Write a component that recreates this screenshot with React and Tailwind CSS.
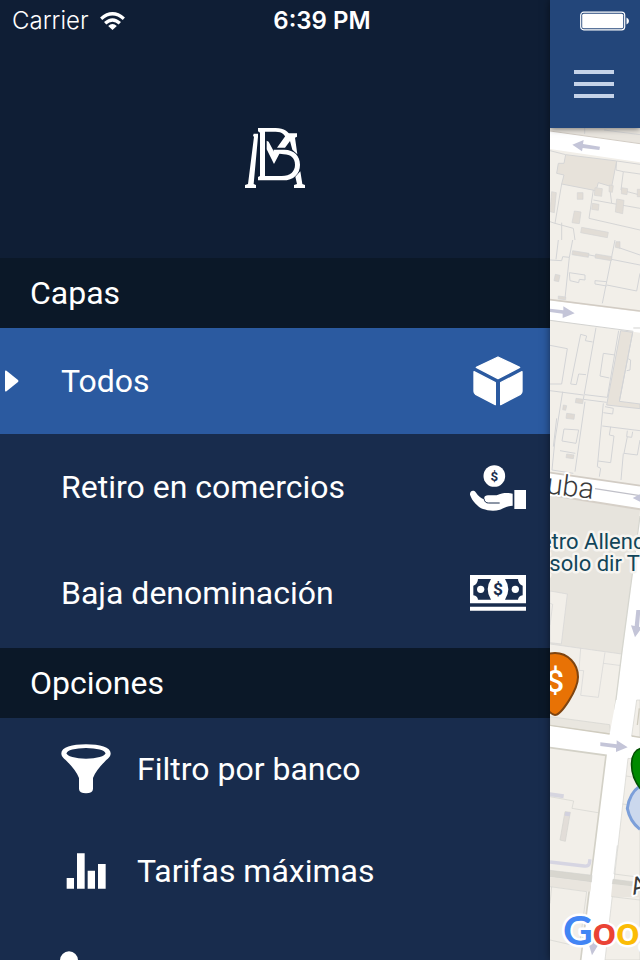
const layers = [
  { id: "all", label: "Todos", Icon: CubeIcon, active: true },
  { id: "cash", label: "Retiro en comercios", Icon: HandIcon },
  { id: "bills", label: "Baja denominación", Icon: BillsIcon },
];

const options = [
  { id: "filter", label: "Filtro por banco", Icon: FunnelIcon },
  { id: "fees", label: "Tarifas máximas", Icon: BarsIcon },
  { id: "more", label: "", Icon: PinIcon },
];

function CubeIcon() {
  return (
    <svg viewBox="60 39 168 168" className="size-14 shrink-0" fill="white" stroke="white" strokeWidth="4" strokeLinejoin="round" aria-hidden="true">
      <path d="M144 51 L209 82 L144 116 L79 82Z" />
      <path d="M72 95 L136 128 V194 L77 163 Q72 160 72 154Z" />
      <path d="M216 95 L152 128 V194 L211 163 Q216 160 216 154Z" />
    </svg>
  );
}

function HandIcon() {
  return (
    <svg viewBox="60 357 168 168" className="size-14 shrink-0" fill="white" aria-hidden="true">
      <circle cx="133" cy="408" r="32.5" />
      <text x="133" y="422" textAnchor="middle" fontSize="40" className="fill-[#182c4d] font-['Roboto',sans-serif] font-bold">$</text>
      <path d="M60 464 C59 452 71 449 77 457 C85 469 94 476 103 478 C101 469 107 466 114 466 H140 C158 458 172 458 188 461 V497 C170 498 160 505 150 509 C130 515 112 511 99 507 C84 501 66 483 60 464Z" />
      <path d="M102 476 C104 486 108 489 116 489 H149" fill="none" stroke="#182c4d" strokeWidth="3" />
      <rect x="193" y="450" width="35" height="57" />
    </svg>
  );
}

function BillsIcon() {
  return (
    <svg viewBox="60 675 168 168" className="size-14 shrink-0" fill="white" aria-hidden="true">
      <path d="M60 705 H228 V790 H60Z M60 800 H228 V812 H60Z" />
      <path d="M84 717 H123 Q103 748 123 779 H84 Q83 768 70 766 V737 Q83 733 84 717Z" fill="#182c4d" />
      <path d="M204 717 H165 Q185 748 165 779 H204 Q205 768 218 766 V737 Q205 733 204 717Z" fill="#182c4d" />
      <circle cx="92" cy="748" r="11" />
      <circle cx="196" cy="748" r="11" />
      <text x="144" y="766" textAnchor="middle" fontSize="52" className="fill-[#182c4d] font-['Roboto',sans-serif] font-bold">$</text>
    </svg>
  );
}

function FunnelIcon() {
  return (
    <svg viewBox="180 39 156 156" className="size-[52px] shrink-0" fill="white" aria-hidden="true">
      <path d="M184 70 C184 52 216 43 258 43 C300 43 332 52 332 70 C332 82 321 88 314 95 C298 111 285 127 279 144 V177 Q278 190 258 190 Q238 190 237 177 V144 C231 127 218 111 202 95 C195 88 184 82 184 70Z" />
      <ellipse cx="258" cy="70" rx="58" ry="16" fill="#182c4d" />
    </svg>
  );
}

function BarsIcon() {
  return (
    <svg viewBox="180 345 156 156" className="size-[52px] shrink-0" fill="white" aria-hidden="true">
      <path d="M200 444h22v32h-22zM231 370h23v106h-23zM263 422h22v54h-22zM294 402h23v74h-23z" />
    </svg>
  );
}

function PinIcon() {
  return (
    <svg viewBox="180 651 156 156" className="size-[52px] shrink-0" fill="white" aria-hidden="true">
      <circle cx="207" cy="691" r="27" />
    </svg>
  );
}

function WifiIcon() {
  return (
    <svg viewBox="0 0 74 54" className="h-[18px] w-[25px]" fill="none" stroke="white" strokeWidth="10" aria-hidden="true">
      <path d="M3 20 Q37 -9 71 20" />
      <path d="M15 34 Q37 14 59 34" />
      <path d="M37 54 L24 42 Q37 30 50 42Z" fill="white" stroke="none" />
    </svg>
  );
}

function BatteryIcon() {
  return (
    <svg viewBox="0 0 52 20" className="h-5 w-[52px] justify-self-end" aria-hidden="true">
      <rect x="0.7" y="1.2" width="44" height="17.6" rx="3" fill="none" stroke="white" strokeWidth="1.2" />
      <rect x="2.2" y="2.7" width="41" height="14.6" rx="1.5" fill="white" />
      <path d="M46.5 6.5 Q49 7.5 49 10 Q49 12.5 46.5 13.5Z" fill="white" />
    </svg>
  );
}

function Logo() {
  return (
    <svg viewBox="60 54 180 180" className="size-[60px]" fill="white" role="img" aria-label="Banco de México">
      <path d="M86 71 H99 V80 L86 222 L93 225 V234 H60 V225 L69 222 L87 80 L84 78Z" />
      <path d="M99 54 H152 C178 54 192 66 195 78 L185 90 C181 75 172 65 152 65 H120 V198 H170 C196 198 210 184 210 164 C210 145 197 133 176 133 L146 129 V119 H178 C208 119 225 138 225 164 C225 192 206 211 174 211 H99 V201 L105 198 V68 L99 64Z" />
      <path d="M125 92 L131 95 L149 129 L155 126 H166 L147 162 L125 118Z" />
      <path d="M187 70 H216 V80 L210 83 L217 133 L202 119 L195 93 L180 113 H156Z" />
      <path d="M226 184 L232 222 L240 225 V234 H207 V225 L216 222 L211 200Z" />
    </svg>
  );
}

function StreetMap() {
  return (
    <svg viewBox="550 128 90 832" className="block h-[832px] w-full" preserveAspectRatio="xMinYMin slice" role="img" aria-label="Mapa">
      <rect x="550" y="128" width="900" height="832" fill="#f2efe9" />

      {/* Northern blocks */}
      <g transform="translate(540 0) scale(0.33333)" fill="none" stroke="#d5d5d5" strokeWidth="3">
        <path d="M30 384 H300 V430 L30 392Z" fill="#e9e5de" stroke="none" />
        <path d="M30 393 L300 431 V487 L30 447Z" fill="#fff" stroke="none" />
        <path d="M30 393 L300 431" stroke="#d2ccc4" strokeWidth="3" />
        <path d="M134 384 V402 M192 390 L300 404" />
        <path d="M77 464 L230 483 L215 560 L175 548 L168 572 L65 552 L72 525 L50 520 L55 490 L72 490Z" fill="#e7e2da" />
        <path d="M97 434 L131 420 L129 432 L180 440 L178 450 L128 444 L126 454Z" fill="#c4c5d8" stroke="none" />
        <path d="M30 452 L77 464 M230 483 L300 493 M230 483 L228 510 L250 515 L243 570 L300 585 M250 515 L300 522 M65 552 L45 670 L30 665 M160 570 L147 655 L300 690 M160 600 L215 610 L210 570 M45 670 L100 685 L105 720 M215 610 L300 625 M65 668 V720" />
        <g fill="#e2ddd6" strokeWidth="2">
          <path d="M112 578h17v20h-17z M165 563l22 3-2 23-22-3z M157 610l20 3-2 18-20-3z M230 597l22 4-4 40-22-5z M103 633l20 3-5 35-22-3z M208 555l12 2-3 20-10-2z M245 563l18 3-2 18-17-3z M292 568h10v22h-10z M35 575l14 3-6 60-13-3z M125 682l80 15-3 16-80-15z" />
        </g>
      </g>

      <g transform="translate(540 240) scale(0.33333)" fill="none" stroke="#d3d4d6" strokeWidth="3">
        <path d="M30 60 L65 62 L68 50 L88 52 L75 175 M98 0 L88 52 M98 35 L300 75 M55 0 L48 58 M225 0 L187 190 M200 135 L290 153 L300 100 M228 20 L300 45 M88 98 L135 105 V120 L118 118 L116 128 L90 122Z M200 125 L165 122 V132 L200 138" />
        <path d="M98 32l49 8-2 12-49-8z M167 42l49 8-2 12-49-8z M46 103l14 3-4 19-14-3z M228 5h12v20l-14-3z M55 168l22 3v8l-22-2z" fill="#dfdad4" strokeWidth="2" />
        <path d="M30 181 L300 216 V278 L30 240Z" fill="#fff" stroke="none" />
        <path d="M30 179 L300 213" stroke="#d2ccc4" strokeWidth="5" />
        <path d="M30 241 L280 274 M280 264 L300 264" stroke="#d2d2d0" />
        <path d="M30 206 L70 211 V199 L104 220 L68 234 V221 L30 216Z" fill="#c4c5d8" stroke="none" />
        <path d="M242 272 L278 277 L238 484 L300 492 V506 L200 495Z" fill="#e7e2da" />
        <path d="M168 263 L130 478 L200 487 M236 272 L202 472 L135 464 M30 316 L82 326 L65 432 L30 432 M122 283 L140 288 L136 302 L158 306 M122 283 L92 432 L109 434 L116 402 L138 404 M225 345 L190 340 L180 408 L208 414 M278 277 L238 484 M262 355 L272 360 L270 390 L260 392 M30 452 L130 465 M190 490 L172 680 L182 685 L178 710 M135 485 L105 695 M68 455 L45 600 L36 690 L100 700 M72 567 L116 570 L108 610 L66 603Z M60 632 L106 640 M187 558 L300 572 M212 560 L208 585 L222 588 L212 668 L174 663 M262 572 L260 590 L275 592 L278 575 M262 590 L252 640 L292 645 L300 600 M195 500 L220 505 L218 522 L190 518 M250 640 L243 720 M50 535 L40 620" />
        <path d="M108 475l22 3-2 13-22-3z M80 520l24 3-2 15-24-3z M80 642l22 3-2 11-22-3z M70 495l10 2-3 14-9-2z" fill="#dfdad4" strokeWidth="2" />
      </g>

      {/* Plaza and the avenue beside it */}
      <g transform="translate(540 460) scale(0.33333)" fill="none" stroke="#d5d5d5" strokeWidth="2">
        <path d="M30 38 L300 77 V148 L30 104Z" fill="#fff" stroke="none" />
        <path d="M30 38 L300 77" stroke="#d2ccc4" strokeWidth="5" />
        <path d="M165 86 L300 107" stroke="#c0c0c8" strokeWidth="4" />
        <path d="M278 114 L300 103 V125Z" fill="#c4c5d8" stroke="none" />
        <path d="M30 107 L300 150 L245 582 L30 552Z" fill="#e7e4dd" stroke="none" />
        <path d="M30 105 L300 148" stroke="#d6d0c8" strokeWidth="6" />
        <path d="M30 393 L82 402 L64 552 L30 548Z" fill="#f2efe9" />
        <path d="M30 430 L38 433 L30 495 M30 552 L245 582 M195 577 L175 712 M122 565 L117 630 M98 630 L131 632 L122 706 L175 712 M190 610 L245 617" />
        <path d="M300 168 L224 750 H300Z" fill="#fff" stroke="none" />
        <path d="M300 168 L245 582 L224 750" stroke="#d6d6cf" strokeWidth="4" />
        <path d="M289 450 L301 450 L297 500 L306 502 L285 532 L273 496 L284 498Z" fill="#c4c5d8" stroke="none" />
      </g>

      {/* Southern crossing */}
      <g transform="translate(540 700) scale(0.33333)" fill="none" stroke="#d3d3cf" strokeWidth="2">
        <path d="M30 50 L209 74 L212 102 L30 77Z" fill="#e9e6df" />
        <path d="M228 0 L300 0 V780 H122 L198 166 L30 143 V77 L209 102Z" fill="#fff" stroke="none" />
        <path d="M290 0 L275 108 L300 111 V0Z" fill="#f2efe9" />
        <path d="M298 25 L292 75 M30 76 L209 102 M275 108 L300 112" stroke="#d0ccbf" strokeWidth="4" />
        <path d="M30 143 L198 166 L122 780" stroke="#d3d1c7" strokeWidth="5" />
        <path d="M264 175 L300 179 V780 H195Z" fill="#f2efe9" />
        <path d="M258 228 L300 235 M248 312 L300 320 M232 436 L222 522 L300 532" />
        <path d="M30 511 L156 526 L154 546 L30 530Z" fill="#d8d6cf" />
        <path d="M219 538 L300 548 V562 L217 552Z" fill="#d8d6cf" />
        <path d="M30 531 L154 547 L151 575 L30 559Z M217 552 L300 562 V592 L213 590Z" fill="#e9e5de" stroke="none" />
        <path d="M96 325 L174 338 M30 290 L101 303 L96 325 M35 560 L30 610 M30 560 L140 575 L118 740 L30 720 M215 590 L300 600" />
        <path d="M30 277 L72 283 L70 295 L30 289Z" fill="#d6d5df" stroke="none" />
        <path d="M30 486 L132 498 Q146 500 148 490 L150 478" stroke="#d6d5e2" strokeWidth="10" />
        <path d="M75 335 L91 337 L76 424 L60 420Z" fill="#e2ddd8" />
        <path d="M76 335 L91 337 L89 349 L74 347Z" fill="#d2d1de" stroke="none" />
        <path d="M181 127 L230 133 V121 L263 142 L228 156 V144 L181 138Z" fill="#c4c5d8" stroke="none" />
        <path d="M155 700 V728 L145 728 L156 766 L175 734 L163 732 L168 700Z" fill="#c4c5d8" stroke="none" />
        <path d="M300 258 Q268 280 262 325 Q270 365 300 388" fill="#cbd8ed" stroke="#7c9fd9" strokeWidth="9" />
        <path d="M305 145 C267 150 263 220 303 268Z" fill="#008a00" stroke="#035003" strokeWidth="5" />
      </g>

      <path d="M555 715 C549 715 532 690 532 677 A23 24 0 0 1 578 677 C578 690 561 715 555 715Z" fill="#e87205" stroke="#7e4410" strokeWidth="2" />
      <text x="555" y="692" textAnchor="middle" fontSize="32" className="fill-white font-['Roboto',sans-serif] font-medium">$</text>

      <g className="fill-[#3a3a3a] stroke-white font-['Roboto',sans-serif]" strokeWidth="4" strokeLinejoin="round" paintOrder="stroke">
        <text x="593" y="499" textAnchor="end" fontSize="29" fontWeight="300" transform="rotate(7 593 499)">Cuba</text>
        <text x="633" y="895" fontSize="24" transform="rotate(-14 633 895)">A</text>
      </g>
      <g className="fill-[#124559] stroke-[#f7f5f1] font-['Roboto',sans-serif]" strokeWidth="5" strokeLinejoin="round" paintOrder="stroke" fontSize="22">
        <text x="657" y="549" textAnchor="end">Metro Allende</text>
        <text x="640" y="571" textAnchor="end">(solo dir T</text>
      </g>
      <text x="563" y="945" fontSize="41" className="stroke-white font-['Lato',sans-serif] font-bold" strokeWidth="5" strokeLinejoin="round" paintOrder="stroke">
        <tspan fill="#4285f4">G</tspan>
        <tspan fill="#ea4335">o</tspan>
        <tspan fill="#fbbc05">o</tspan>
        <tspan fill="#4285f4">g</tspan>
      </text>
    </svg>
  );
}

function SectionTitle({ children }) {
  return (
    <h2 className="flex h-[70px] items-center bg-[#0b1828] px-[30px]">{children}</h2>
  );
}

function StatusBar() {
  return (
    <div className="absolute inset-x-0 top-0 z-20 grid h-[42px] grid-cols-[1fr_auto_1fr] items-center pr-2 pl-3 font-['Inter',sans-serif] text-2xl text-white">
      <div className="flex items-center gap-[11px]">
        <span className="font-light">Carrier</span>
        <WifiIcon />
      </div>
      <time className="font-semibold">6:39 PM</time>
      <BatteryIcon />
    </div>
  );
}

export default function App() {
  return (
    <div className="relative flex h-screen overflow-hidden bg-[#182c4d] font-['Roboto',sans-serif] text-[32px] leading-10 text-white">
      <StatusBar />
      <nav className="min-w-0 flex-1">
        <div className="flex h-[258px] justify-center bg-[#0f1e35] pt-32">
          <Logo />
        </div>
        <SectionTitle>Capas</SectionTitle>
        <ul className="pb-0.5">
          {layers.map(({ id, label, Icon, active }) => (
            <li key={id}>
              <button
                type="button"
                aria-pressed={!!active}
                className={`flex h-[106px] w-full items-center pr-6 text-left ${active ? "bg-[#2b5aa0]" : ""}`}
              >
                <span className="w-[61px] shrink-0 pl-[5px]">
                  {active && (
                    <svg viewBox="0 0 14 22" className="h-[22px] w-[14px]" fill="white" aria-hidden="true">
                      <path d="M0 1.5 Q0 0 1.5 0.8 L13 10 Q14 11 13 12 L1.5 21.2 Q0 22 0 20.5Z" />
                    </svg>
                  )}
                </span>
                <span className="flex-1">{label}</span>
                <Icon />
              </button>
            </li>
          ))}
        </ul>
        <SectionTitle>Opciones</SectionTitle>
        <ul>
          {options.map(({ id, label, Icon }) => (
            <li key={id}>
              <button type="button" className="flex h-[102px] w-full items-center gap-[25px] pl-[60px] text-left">
                <Icon />
                <span>{label}</span>
              </button>
            </li>
          ))}
        </ul>
      </nav>
      <main className="z-10 w-[90px] shrink-0 overflow-hidden bg-[#f2efe9] shadow-[0_0_8px_rgba(0,0,0,0.5)]">
        <header className="relative h-32 bg-[#23467a] px-6 pt-[70px] shadow-[0_1px_6px_rgba(0,0,0,0.5)]">
          <button type="button" aria-label="Menú" className="flex w-10 flex-col gap-2">
            <span className="h-1 bg-[#c5d3e9]" />
            <span className="h-1 bg-[#c5d3e9]" />
            <span className="h-1 bg-[#c5d3e9]" />
          </button>
        </header>
        <StreetMap />
      </main>
    </div>
  );
}
